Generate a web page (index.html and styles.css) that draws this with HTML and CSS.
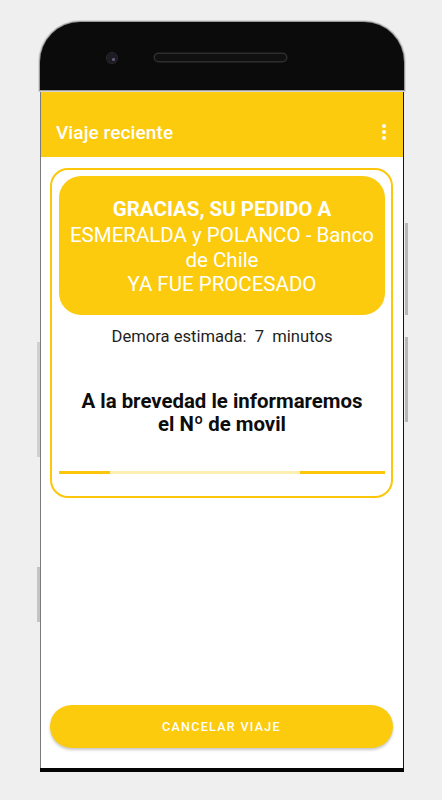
FILE: index.html
```html
<!DOCTYPE html>
<html lang="es">
<head>
<meta charset="utf-8">
<title>Viaje reciente</title>
<link rel="stylesheet" href="styles.css">
</head>
<body>
<div class="device">
  <div class="bezel-top">
    <span class="camera"></span>
    <span class="speaker"></span>
  </div>
  <div class="screen">
    <header class="appbar">
      <h1 class="appbar-title">Viaje reciente</h1>
      <span class="menu" aria-label="Más opciones">
        <i class="dot"></i><i class="dot"></i><i class="dot"></i>
      </span>
    </header>
    <main class="content">
      <section class="card">
        <div class="notice">
          <p class="notice-head">GRACIAS, SU PEDIDO A</p>
          <p class="notice-body">ESMERALDA y POLANCO - Banco de Chile</p>
          <p class="notice-body">YA FUE PROCESADO</p>
        </div>
        <p class="eta">Demora estimada:  7  minutos</p>
        <p class="info">A la brevedad le informaremos<br>el Nº de movil</p>
        <div class="progress">
          <span class="seg seg-on seg-a"></span>
          <span class="seg seg-off"></span>
          <span class="seg seg-on seg-b"></span>
        </div>
      </section>
    </main>
    <div class="footer">
      <button class="cancel" type="button">CANCELAR VIAJE</button>
    </div>
  </div>
  <div class="bezel-bottom"></div>
  <span class="side-btn right-1"></span>
  <span class="side-btn right-2"></span>
  <span class="side-btn left-1"></span>
  <span class="side-btn left-2"></span>
</div>
</body>
</html>
```
FILE: styles.css
```css
html, body {
  margin: 0;
  padding: 0;
  background: #efefef;
  font-family: Roboto, "Noto Sans", "Liberation Sans", sans-serif;
}

body {
  width: 442px;
  height: 800px;
  overflow: hidden;
}

.device {
  position: relative;
  width: 364px;
  margin: 22px 0 0 40px;
  display: flex;
  flex-direction: column;
}

.bezel-top {
  position: relative;
  height: 68px;
  background: #0b0b0b;
  border-radius: 40px 40px 0 0;
  box-shadow: 0 0 0 1px #9a9a9a, 0 0 0 2px #d6d6d6;
}

.camera {
  position: absolute;
  left: 67px;
  top: 31px;
  width: 10px;
  height: 10px;
  border-radius: 50%;
  background: radial-gradient(circle at 65% 65%, #6a5a7a 0 1px, #1d1c24 2px);
  box-shadow: 0 0 0 1px #2a2a2e;
}

.speaker {
  position: absolute;
  left: 115px;
  top: 32px;
  width: 131px;
  height: 7px;
  border-radius: 5px;
  background: #101010;
  box-shadow: 0 0 0 1.5px #2e2e2e;
}

.screen {
  height: 678px;
  background: #fff;
  border-left: 1px solid #7a7a7a;
  border-right: 1px solid #151515;
  display: flex;
  flex-direction: column;
}

.appbar {
  height: 67px;
  background: #fccb0e;
  display: flex;
  align-items: center;
  justify-content: space-between;
  padding: 17px 17px 0 15px;
  box-sizing: border-box;
}

.appbar-title {
  margin: 0;
  color: #fff;
  font-size: 19px;
  font-weight: 500;
  letter-spacing: 0.1px;
}

.menu {
  display: flex;
  flex-direction: column;
  gap: 2px;
}

.dot {
  width: 4px;
  height: 4px;
  border-radius: 50%;
  background: #fff;
}

.content {
  flex: 1;
}

.card {
  margin: 11px 10px 0 9px;
  border: 2px solid #fcc70b;
  border-radius: 18px;
  padding: 6px 6px 22px 7px;
}

.notice {
  background: #fccb0e;
  border-radius: 22px;
  padding: 19px 8px 16px;
  text-align: center;
  color: #fff;
  min-height: 139px;
  box-sizing: border-box;
}

.notice p {
  margin: 0;
}

.notice-head {
  font-size: 20.5px;
  font-weight: 700;
  line-height: 28px;
}

.notice-body {
  font-size: 20.5px;
  font-weight: 400;
  line-height: 24.5px;
}

.eta {
  margin: 11px 0 0;
  text-align: center;
  font-size: 16.6px;
  line-height: 22px;
  color: #1e1e1e;
  white-space: pre;
}

.info {
  margin: 42px 0 0;
  text-align: center;
  font-size: 20.4px;
  font-weight: 700;
  line-height: 23px;
  color: #0d0d0d;
}

.progress {
  margin-top: 35px;
  display: flex;
  height: 3px;
}

.seg-on {
  background: #fcc70b;
}

.seg-a {
  width: 51px;
}

.seg-off {
  width: 190px;
  background: #fdeeb2;
}

.seg-b {
  flex: 1;
}

.footer {
  padding: 0 10px 20px 9px;
}

.cancel {
  display: block;
  width: 100%;
  height: 43px;
  border: none;
  border-radius: 22px;
  background: #fccb0e;
  color: #fff;
  font-family: Roboto, "Noto Sans", sans-serif;
  font-size: 12.5px;
  font-weight: 500;
  letter-spacing: 1.3px;
  box-shadow: 0 2px 3px rgba(0, 0, 0, 0.22);
}

.bezel-bottom {
  height: 4px;
  background: #050505;
}

.side-btn {
  position: absolute;
  width: 3px;
  background: #b8b8b8;
}

.right-1 {
  right: -4px;
  top: 201px;
  height: 92px;
}

.right-2 {
  right: -4px;
  top: 315px;
  height: 85px;
}

.left-1 {
  left: -3px;
  top: 320px;
  height: 115px;
  background: #d0d0d0;
}

.left-2 {
  left: -3px;
  top: 545px;
  height: 55px;
  background: #c4c4c4;
}
```
